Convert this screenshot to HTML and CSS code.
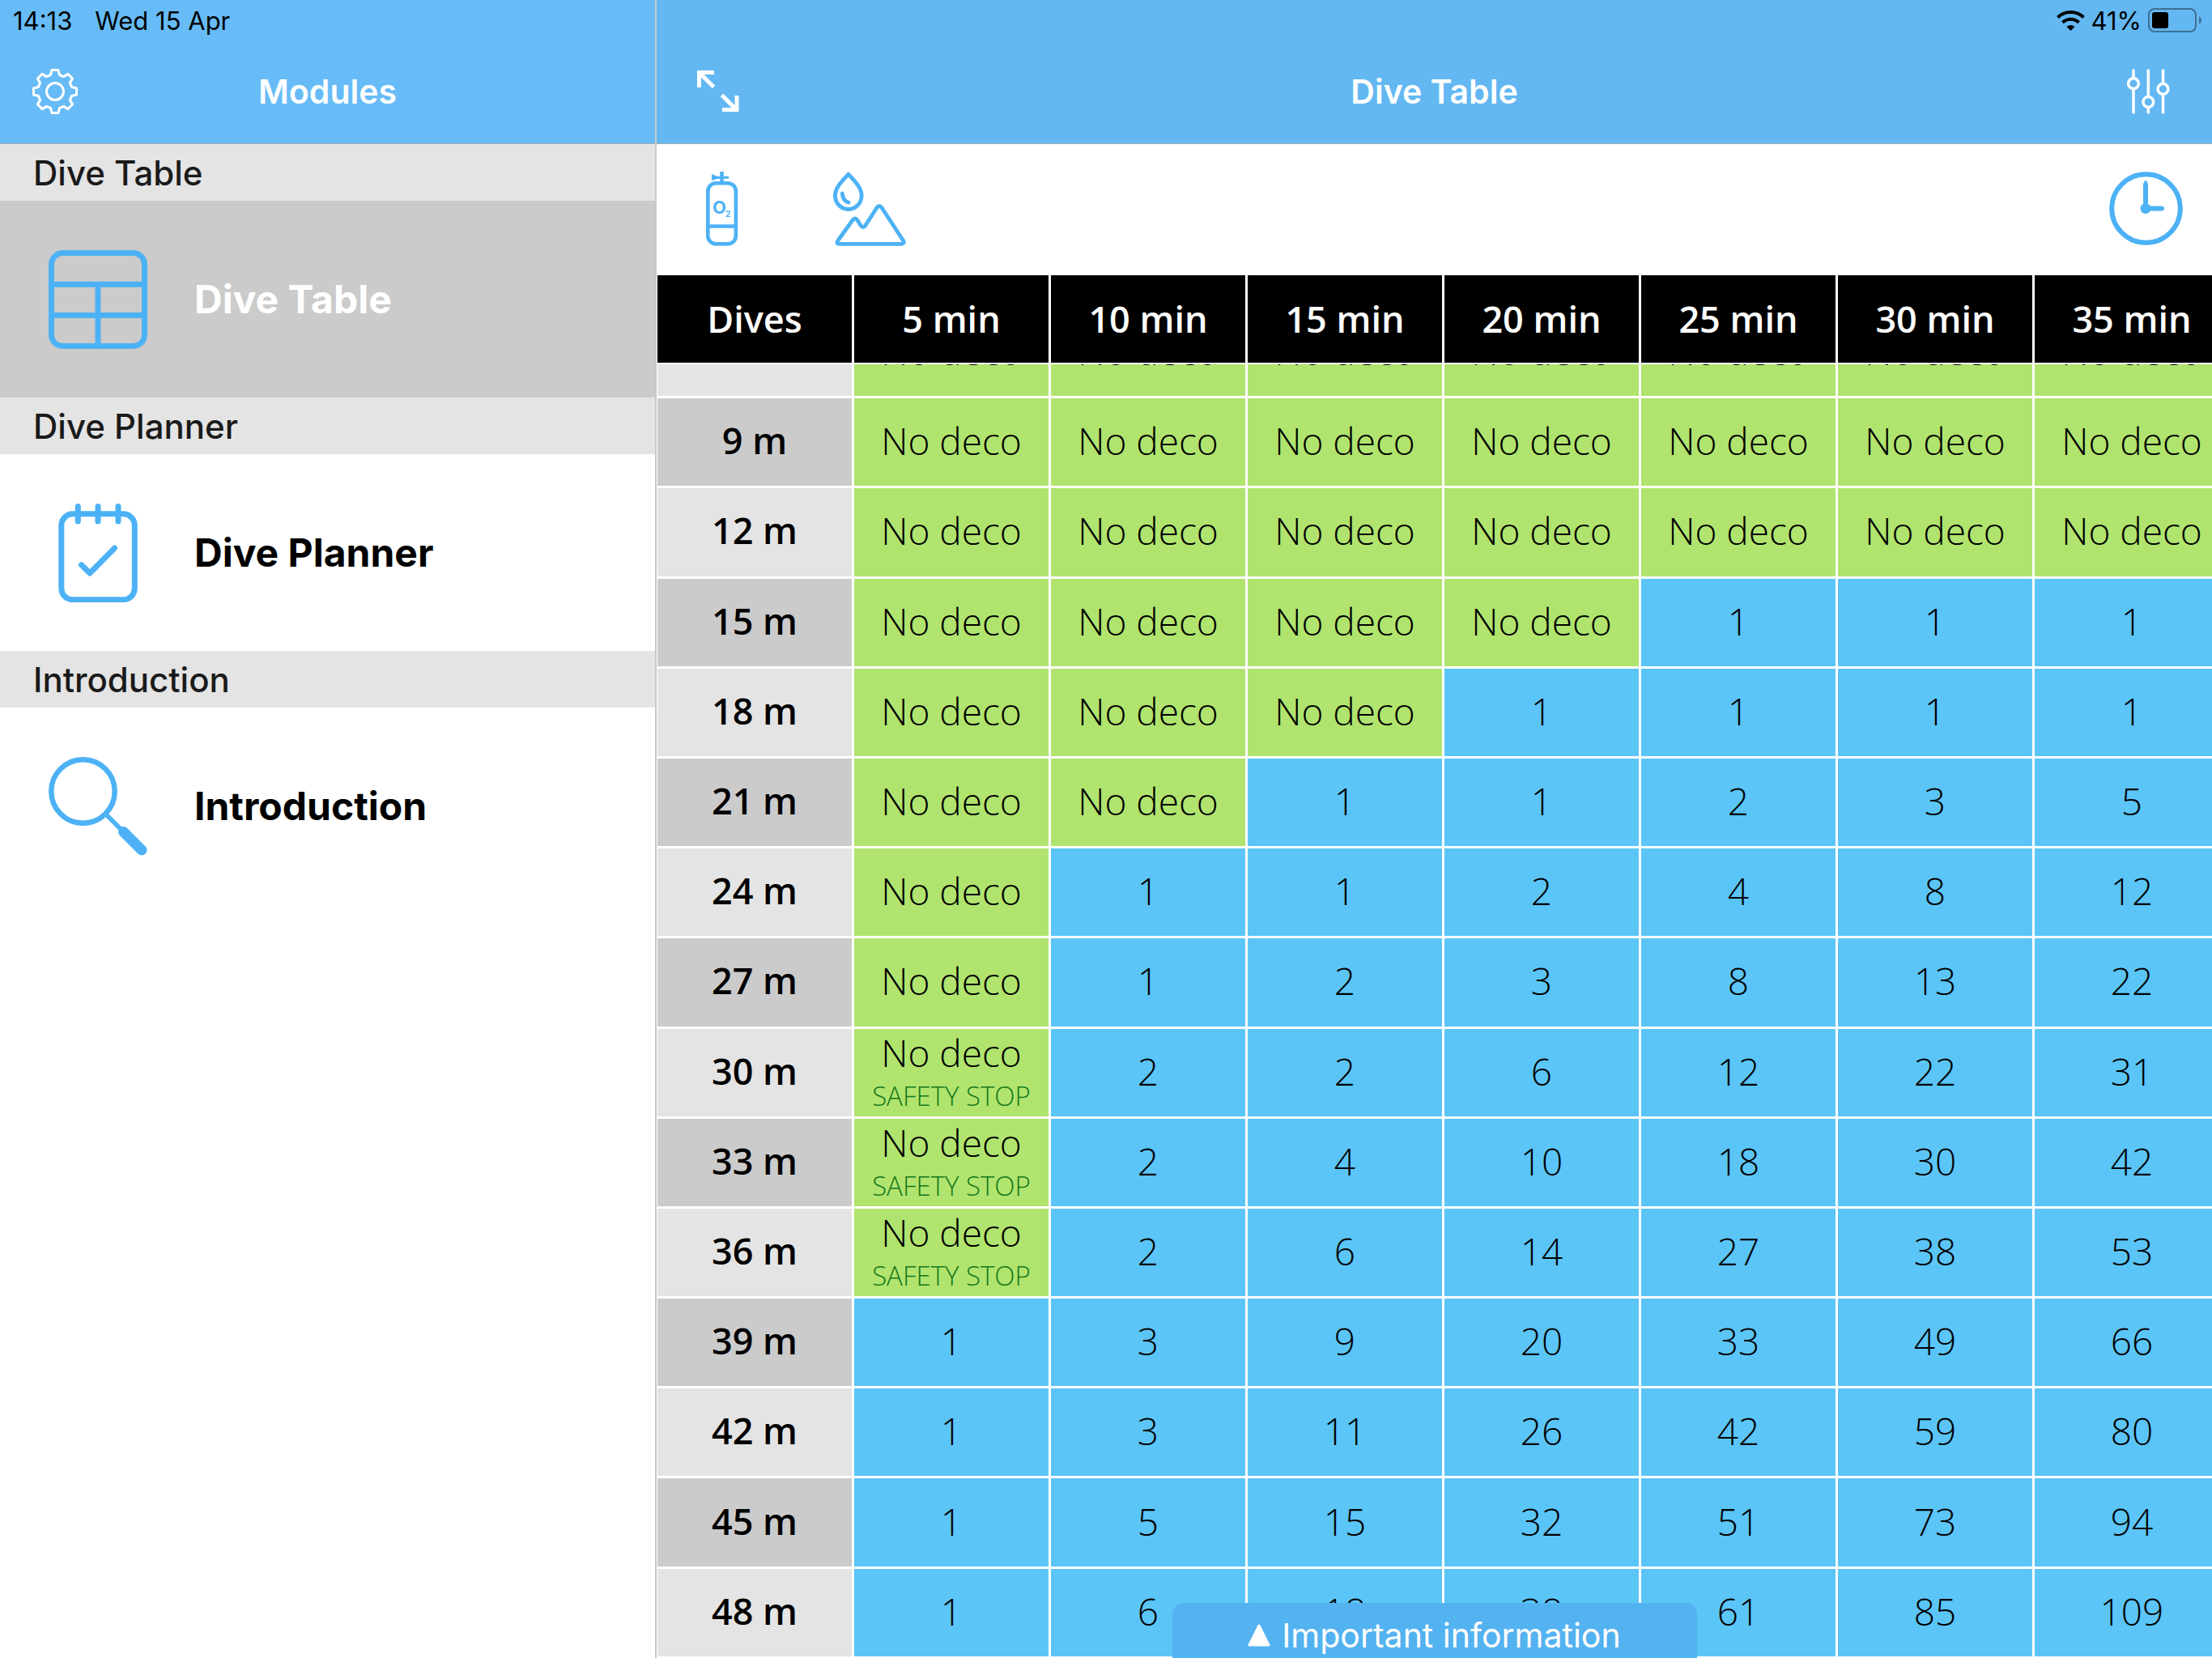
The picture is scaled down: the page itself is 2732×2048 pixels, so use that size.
FILE: index.html
```html
<!DOCTYPE html>
<html lang="en">
<head>
  <meta charset="UTF-8" />
  <meta name="viewport" content="width=device-width, initial-scale=1" />
  <title>Dive Table</title>
  <link rel="stylesheet" href="styles.css">
</head>
<body>
  <aside class="sidebar">
    <header class="top-bar">
      <div class="status">
        <span>14:13</span>
        <span>Wed 15 Apr</span>
      </div>
      <div class="nav-bar">
        <button class="icon-btn" aria-label="Settings">
          <svg width="56" height="56" viewBox="-28 -28 56 56" fill="none" stroke="#fff" stroke-width="3" stroke-linejoin="round">
            <path d="M-4 -26.5 L4 -26.5 L5.5 -20.5 L10.6 -18.4 L15.9 -21.6 L21.6 -15.9 L18.4 -10.6 L20.5 -5.5 L26.5 -4 L26.5 4 L20.5 5.5 L18.4 10.6 L21.6 15.9 L15.9 21.6 L10.6 18.4 L5.5 20.5 L4 26.5 L-4 26.5 L-5.5 20.5 L-10.6 18.4 L-15.9 21.6 L-21.6 15.9 L-18.4 10.6 L-20.5 5.5 L-26.5 4 L-26.5 -4 L-20.5 -5.5 L-18.4 -10.6 L-21.6 -15.9 L-15.9 -21.6 L-10.6 -18.4 L-5.5 -20.5 Z"/>
            <circle r="10.5"/>
          </svg>
        </button>
        <h1>Modules</h1>
      </div>
    </header>

    <nav>
      <h2>Dive Table</h2>
      <a href="#table" class="module active">
        <svg width="122" height="122" viewBox="0 0 122 122" fill="none" stroke="#4db2f5" stroke-width="7">
          <rect x="3.5" y="3.5" width="115" height="115" rx="14"/>
          <path d="M4 42.3 H118 M4 80.5 H118 M61 42 V118"/>
        </svg>
        Dive Table
      </a>
      <h2>Dive Planner</h2>
      <a href="#planner" class="module">
        <svg width="122" height="122" viewBox="0 0 122 122" fill="none" stroke="#4db2f5" stroke-width="7" stroke-linecap="round" stroke-linejoin="round">
          <rect x="15.8" y="12.8" width="90.5" height="106" rx="14"/>
          <path d="M36.3 3.5 V22 M61 3.5 V22 M86 3.5 V22 M40.5 75.7 L51 86 L81.5 55"/>
        </svg>
        Dive Planner
      </a>
      <h2>Introduction</h2>
      <a href="#intro" class="module">
        <svg width="122" height="122" viewBox="0 0 122 122" fill="none" stroke="#4db2f5" stroke-linecap="round">
          <circle cx="42.5" cy="42.5" r="39.2" stroke-width="6.5"/>
          <path d="M71 71 L90 90" stroke-width="5.5"/>
          <path d="M92.5 92.5 L115 115" stroke-width="13"/>
        </svg>
        Introduction
      </a>
    </nav>
  </aside>

  <main class="detail">
    <header class="top-bar">
      <div class="status status-right">
        <svg width="35" height="25" viewBox="0 0 35 25" fill="none" stroke="#000" stroke-width="4">
          <path d="M1.5 8.5 A23 23 0 0 1 33.5 8.5 M7.5 14.8 A14.5 14.5 0 0 1 27.5 14.8"/>
          <path d="M12.5 20 Q17.5 16 22.5 20 L17.5 25 Z" fill="#000" stroke="none"/>
        </svg>
        <span>41%</span>
        <svg class="battery" width="66" height="30" viewBox="0 0 66 30">
          <rect x="1" y="1" width="58" height="28" rx="7" fill="none" stroke="#3d6f92" stroke-width="2"/>
          <rect x="5" y="5" width="20" height="20" rx="3"/>
          <path d="M63 10 Q69 15 63 20 Z" fill="#3d6f92"/>
        </svg>
      </div>
      <div class="nav-bar">
        <button class="icon-btn" aria-label="Full screen">
          <svg width="52" height="52" viewBox="0 0 52 52" fill="none" stroke="#fff" stroke-width="5">
            <path d="M21 2.5 H2.5 V21 M3 3 L20.5 20.5 M31 48.5 H49 V31 M48.5 48.5 L30.5 30.5"/>
          </svg>
        </button>
        <h1>Dive Table</h1>
        <button class="icon-btn" aria-label="Options">
          <svg width="53" height="56" viewBox="0 0 53 56" fill="none" stroke="#fff" stroke-width="3.5" stroke-linecap="round">
            <path d="M8 2 V11 M8 25 V54 M26.3 2 V34 M26.3 48 V54 M44.5 2 V18 M44.5 32 V54"/>
            <circle cx="8" cy="18.2" r="6.4"/>
            <circle cx="26.3" cy="41" r="6.4"/>
            <circle cx="44.5" cy="25" r="6.4"/>
          </svg>
        </button>
      </div>
    </header>

    <div class="toolbar">
      <button class="icon-btn" aria-label="Gas">
        <svg width="40" height="92" viewBox="0 0 40 92" fill="none" stroke="#4db2f5" stroke-width="4.6">
          <rect x="2.3" y="14.3" width="34.6" height="75" rx="10"/>
          <path d="M2 67.5 H37 M19.5 0 V13"/>
          <path d="M12 7.3 H28" stroke-width="3"/>
          <path d="M7 3 L14 6 V9 L7 11 Z" fill="#4db2f5" stroke="none"/>
          <text x="8" y="52" class="gas">O</text>
          <text x="24" y="56" class="gas gas-sub">2</text>
        </svg>
      </button>
      <button class="icon-btn" aria-label="Water and altitude">
        <svg width="90" height="92" viewBox="0 0 90 92" fill="none" stroke="#4db2f5" stroke-width="4.8" stroke-linejoin="round" stroke-linecap="round">
          <path d="M18.8 3 C13 10 2.4 19 2.4 29.5 A16.4 17 0 0 0 35.2 29.5 C35.2 19 24.6 10 18.8 3 Z"/>
          <path d="M11.3 27 Q12 36 19 38"/>
          <path d="M7 89.3 H84 Q89 89 86.5 85 L60 44.5 Q57 40.5 54 44.5 L40.5 65.5 Q37.5 71 34 66.5 L30 60 Q27 56 24 60 L6 85 Q3.5 89 7 89.3 Z"/>
        </svg>
      </button>
      <button class="icon-btn push-right" aria-label="Surface interval">
        <svg width="92" height="92" viewBox="0 0 92 92" fill="none" stroke="#4db2f5" stroke-width="6">
          <circle cx="45.5" cy="45.5" r="42.3"/>
          <path d="M45 45.5 H65" stroke-linecap="round"/>
          <path d="M42 45 V15 L45 10 L48 15 V45 Z" fill="#4db2f5" stroke="none"/>
          <circle cx="45" cy="45.5" r="6.5" fill="#4db2f5" stroke="none"/>
        </svg>
      </button>
    </div>

    <div class="table-scroll" id="tableScroll">
      <table>
        <thead>
          <tr>
            <th>Dives</th>
            <th>5 min</th>
            <th>10 min</th>
            <th>15 min</th>
            <th>20 min</th>
            <th>25 min</th>
            <th>30 min</th>
            <th>35 min</th>
          </tr>
        </thead>
        <tbody id="diveRows"></tbody>
      </table>
    </div>

    <button class="info-tab">
      <svg width="28" height="28" viewBox="0 0 28 28" fill="#fff" stroke="#fff" stroke-width="3" stroke-linejoin="round">
        <path d="M14 2 L26 26 H2 Z"/>
      </svg>
      Important information
    </button>
  </main>

  <script>
    // 0 = no deco, 'S' = no deco with safety stop, otherwise stop time
    const dives = [
      [6, 0, 0, 0, 0, 0, 0, 0],
      [9, 0, 0, 0, 0, 0, 0, 0],
      [12, 0, 0, 0, 0, 0, 0, 0],
      [15, 0, 0, 0, 0, 1, 1, 1],
      [18, 0, 0, 0, 1, 1, 1, 1],
      [21, 0, 0, 1, 1, 2, 3, 5],
      [24, 0, 1, 1, 2, 4, 8, 12],
      [27, 0, 1, 2, 3, 8, 13, 22],
      [30, 'S', 2, 2, 6, 12, 22, 31],
      [33, 'S', 2, 4, 10, 18, 30, 42],
      [36, 'S', 2, 6, 14, 27, 38, 53],
      [39, 1, 3, 9, 20, 33, 49, 66],
      [42, 1, 3, 11, 26, 42, 59, 80],
      [45, 1, 5, 15, 32, 51, 73, 94],
      [48, 1, 6, 18, 38, 61, 85, 109]
    ];

    const body = document.getElementById('diveRows');

    dives.forEach(([depth, ...stops]) => {
      const row = document.createElement('tr');

      const th = document.createElement('th');
      th.textContent = depth + ' m';
      row.appendChild(th);

      stops.forEach(stop => {
        const td = document.createElement('td');
        if (stop === 0 || stop === 'S') {
          td.className = 'no-deco';
          td.textContent = 'No deco';
        } else {
          td.textContent = stop;
        }
        if (stop === 'S') {
          td.classList.add('safety');
          const small = document.createElement('small');
          small.textContent = 'SAFETY STOP';
          td.appendChild(small);
        }
        row.appendChild(td);
      });

      body.appendChild(row);
    });

    // start a little way down the list
    document.getElementById('tableScroll').scrollTop = 69;
  </script>
</body>
</html>
```
FILE: styles.css
```css
* {
  box-sizing: border-box;
}
body {
  margin: 0;
  height: 100vh;
  display: flex;
  overflow: hidden;
  background: #fff;
  color: #000;
  font-family: Inter, "Liberation Sans", sans-serif;
}
h1, h2 {
  margin: 0;
}
svg {
  display: block;
  flex: none;
}
button {
  border: none;
  background: none;
  padding: 0;
  font-family: inherit;
  cursor: pointer;
}

/* top bars */
.top-bar {
  flex: none;
  height: 178px;
  background: #63b8f2;
  border-bottom: 1px solid #a9adb3;
}
.status {
  height: 50px;
  padding: 0 16px;
  display: flex;
  align-items: center;
  gap: 28px;
  font-size: 31px;
}
.status-right {
  justify-content: flex-end;
  gap: 8px;
  padding-right: 13px;
}
.nav-bar {
  position: relative;
  height: 126px;
  padding: 0 52px 0 50px;
  display: flex;
  align-items: center;
  justify-content: space-between;
}
.nav-bar h1 {
  position: absolute;
  left: 0;
  right: 0;
  text-align: center;
  color: #fff;
  font-size: 41px;
  font-weight: 600;
  pointer-events: none;
}

/* sidebar */
.sidebar {
  flex: none;
  width: 811px;
  border-right: 2px solid #c8c8c8;
}
.sidebar .top-bar {
  background: #67bcf7;
}
.sidebar .nav-bar {
  padding: 0 40px;
}
.sidebar h2 {
  height: 70px;
  padding: 0 41px;
  background: #e4e4e4;
  color: #1a1a1a;
  font-size: 42px;
  font-weight: 500;
  line-height: 72px;
}
.module {
  display: flex;
  align-items: center;
  gap: 58px;
  height: 243px;
  padding-left: 60px;
  color: #000;
  font-size: 48px;
  font-weight: 700;
  text-decoration: none;
}
.module.active {
  background: #cbcbcb;
  color: #fff;
}

/* detail pane */
.detail {
  position: relative;
  flex: 1;
  min-width: 0;
  display: flex;
  flex-direction: column;
}
.toolbar {
  flex: none;
  height: 162px;
  padding: 0 35px 2px 61px;
  display: flex;
  align-items: center;
  gap: 117px;
}
.push-right {
  margin-left: auto;
}
.gas {
  fill: #4db2f5;
  stroke: none;
  font-size: 22px;
  font-weight: 700;
}
.gas-sub {
  font-size: 10px;
}

/* dive table */
.table-scroll {
  flex: 1;
  min-height: 0;
  margin-left: 1px;
  overflow: auto;
  scrollbar-width: none;
}
table {
  width: 1944px;
  height: 1778px;
  table-layout: fixed;
  border-collapse: separate;
  border-spacing: 0;
  font-family: "Open Sans", "Noto Sans", sans-serif;
  font-size: 45px;
}
th, td {
  height: 111px;
  padding: 0 0 4px;
  border-right: 3px solid #fff;
  border-bottom: 3px solid #fff;
  line-height: 58px;
  text-align: center;
}
th {
  font-weight: 600;
}
td {
  background: #5bc5f7;
  font-size: 46px;
  font-weight: 300;
}
thead th {
  position: sticky;
  top: 0;
  height: 110px;
  padding: 0;
  border-bottom-width: 2px;
  background: #000;
  color: #fff;
}
tbody th {
  background: #e4e4e4;
}
tbody tr:nth-child(even) th {
  background: #cbcbcb;
}
td.no-deco {
  background: #b0e46e;
}
td.safety {
  padding: 0;
}
td small {
  display: block;
  color: #15771a;
  font-size: 33px;
  line-height: 50px;
}

.info-tab {
  position: absolute;
  bottom: 0;
  left: 50%;
  transform: translateX(-50%);
  width: 648px;
  height: 68px;
  padding-top: 12px;
  display: flex;
  align-items: center;
  justify-content: center;
  gap: 14px;
  border-radius: 14px 14px 0 0;
  background: #53b2f0;
  color: #fff;
  font-size: 41px;
}
```
